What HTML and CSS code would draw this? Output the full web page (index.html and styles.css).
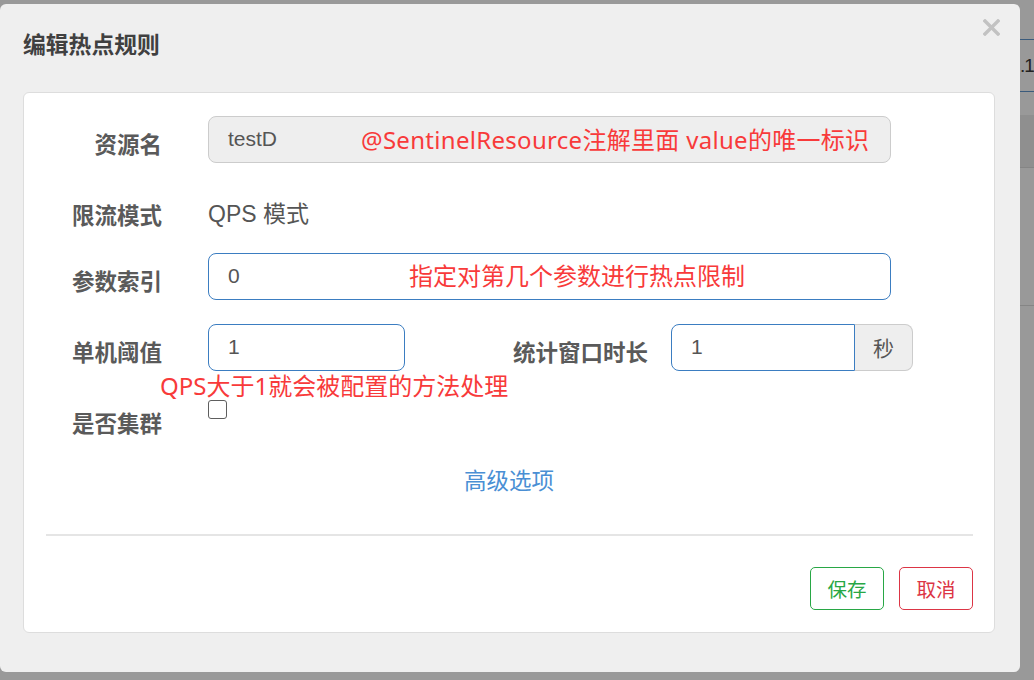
FILE: index.html
```html
<!DOCTYPE html>
<html lang="zh-CN">
<head>
<meta charset="utf-8">
<title>编辑热点规则</title>
<link rel="stylesheet" href="styles.css">
</head>
<body>
  <div class="modal">
    <div class="modal-header">
      <h4 class="title">编辑热点规则</h4>
      <svg class="close" width="17" height="17" viewBox="0 0 17 17" aria-label="close">
        <path d="M2 2 L15 15 M15 2 L2 15" stroke="#c2c2c2" stroke-width="3.4" stroke-linecap="square" fill="none"/>
      </svg>
    </div>
    <div class="card">
      <div class="form">
        <div class="row">
          <div class="label">资源名</div>
          <div class="input input-wide input-readonly">testD</div>
          <span class="note note-1">@SentinelResource注解里面 value的唯一标识</span>
        </div>
        <div class="row row-short">
          <div class="label">限流模式</div>
          <div class="static">QPS 模式</div>
        </div>
        <div class="row">
          <div class="label">参数索引</div>
          <div class="input input-wide input-blue">0</div>
          <span class="note note-2">指定对第几个参数进行热点限制</span>
        </div>
        <div class="row">
          <div class="label">单机阈值</div>
          <div class="input input-small input-blue">1</div>
          <div class="label label-2">统计窗口时长</div>
          <div class="group">
            <div class="input input-group-field input-blue">1</div>
            <div class="addon">秒</div>
          </div>
          <span class="note note-3">QPS大于1就会被配置的方法处理</span>
        </div>
        <div class="row row-short">
          <div class="label">是否集群</div>
          <span class="checkbox"></span>
        </div>
      </div>
      <div class="advanced">高级选项</div>
      <div class="divider"></div>
      <div class="footer">
        <button class="btn btn-save">保存</button>
        <button class="btn btn-cancel">取消</button>
      </div>
    </div>
  </div>
  <div class="backdrop-page">
    <div class="bg-line"></div>
    <div class="bg-cell">.1</div>
    <div class="bg-line"></div>
    <div class="bg-gap"></div>
    <div class="bg-band"></div>
    <div class="bg-gap-2"></div>
    <div class="bg-line bg-line-grey"></div>
  </div>
</body>
</html>
```

FILE: styles.css
```css
html, body {
  margin: 0;
  padding: 0;
}

body {
  background: #999999;
  height: 680px;
  overflow: hidden;
  display: flex;
  align-items: flex-start;
  font-family: "Liberation Sans", "Noto Sans CJK SC", sans-serif;
}

.modal {
  flex-shrink: 0;
  width: 1020px;
  height: 668px;
  margin-top: 4px;
  background: #efefef;
  border-radius: 6px;
  padding: 0 25px 0 23px;
  box-sizing: border-box;
}

.modal-header {
  display: flex;
  justify-content: space-between;
  align-items: flex-start;
  height: 88px;
  padding-top: 25px;
  box-sizing: border-box;
}

.title {
  margin: 0;
  font-family: "Noto Sans CJK SC", sans-serif;
  font-size: 22.8px;
  font-weight: 700;
  line-height: 30px;
  color: #404040;
}

.close {
  margin-top: -10px;
  margin-right: -5px;
}

.card {
  height: 541px;
  background: #ffffff;
  border: 1px solid #dddddd;
  border-radius: 6px;
  box-sizing: border-box;
  padding: 23px 21px 0 0;
  display: flex;
  flex-direction: column;
}

.form {
  display: flex;
  flex-direction: column;
  gap: 24px;
}

.row {
  position: relative;
  display: flex;
  align-items: flex-start;
  height: 47px;
}

.row-short {
  height: 42px;
}

.label {
  width: 138px;
  flex-shrink: 0;
  margin-right: 46px;
  padding-top: 12px;
  line-height: 30px;
  text-align: right;
  font-family: "Noto Sans CJK SC", sans-serif;
  font-size: 22.5px;
  font-weight: 700;
  color: #5a5a5a;
}

.label-2 {
  width: 150px;
  margin-left: 93px;
  margin-right: 23px;
}

.static {
  padding-top: 12px;
  line-height: 30px;
  font-size: 23px;
  color: #555555;
}

.input {
  height: 47px;
  box-sizing: border-box;
  border: 1px solid #cccccc;
  border-radius: 8px;
  padding-left: 19px;
  line-height: 44px;
  font-size: 21px;
  color: #555555;
  background: #ffffff;
}

.input-wide {
  width: 683px;
}

.input-small {
  width: 197px;
}

.input-readonly {
  background: #eeeeee;
  border-color: #cccccc;
}

.input-blue {
  border-color: #3b7dc1;
}

.group {
  display: flex;
}

.input-group-field {
  width: 184px;
  border-radius: 8px 0 0 8px;
}

.addon {
  width: 58px;
  height: 47px;
  box-sizing: border-box;
  border: 1px solid #cccccc;
  border-left: 0;
  border-radius: 0 8px 8px 0;
  background: #eeeeee;
  text-align: center;
  line-height: 44px;
  font-family: "Noto Sans CJK SC", sans-serif;
  font-size: 21px;
  color: #555555;
}

.checkbox {
  display: block;
  width: 19px;
  height: 19px;
  margin-top: 5px;
  box-sizing: border-box;
  border: 1.5px solid #5e5e5e;
  border-radius: 3px;
  background: #ffffff;
}

.note {
  position: absolute;
  line-height: 30px;
  font-family: "Noto Sans", "Noto Sans CJK SC", sans-serif;
  font-size: 24px;
  color: #f83a3a;
  white-space: nowrap;
}

.note-1 {
  left: 337px;
  top: 9px;
  letter-spacing: 0.3px;
}

.note-2 {
  left: 385px;
  top: 8px;
}

.note-3 {
  left: 136px;
  top: 47px;
}

.advanced {
  margin-top: 27px;
  line-height: 30px;
  text-align: center;
  padding-left: 21px;
  font-family: "Noto Sans CJK SC", sans-serif;
  font-size: 22.5px;
  color: #4a8fd4;
}

.divider {
  margin-top: 40px;
  margin-left: 22px;
  height: 2px;
  background: #e5e5e5;
}

.footer {
  margin-top: 31px;
  display: flex;
  justify-content: flex-end;
  gap: 15px;
}

.btn {
  width: 74px;
  height: 43px;
  box-sizing: border-box;
  background: #ffffff;
  border: 1px solid;
  border-radius: 5px;
  padding: 0;
  font-family: "Noto Sans CJK SC", sans-serif;
  font-size: 19.5px;
  line-height: 41px;
}

.btn-save {
  color: #28a745;
  border-color: #28a745;
}

.btn-cancel {
  color: #dc3545;
  border-color: #dc3545;
}

.backdrop-page {
  flex: 1;
  height: 680px;
  padding-top: 39px;
  box-sizing: border-box;
  overflow: hidden;
}

.bg-line {
  height: 1px;
  background: #3b5b7c;
}

.bg-line-grey {
  background: #858585;
}

.bg-cell {
  height: 51px;
  line-height: 51px;
  font-size: 19px;
  letter-spacing: -1px;
  color: #222222;
  white-space: nowrap;
}

.bg-gap {
  height: 23px;
}

.bg-band {
  height: 52px;
  background: #8f8f8f;
  border-bottom: 1px solid #858585;
}

.bg-gap-2 {
  height: 137px;
}
```
